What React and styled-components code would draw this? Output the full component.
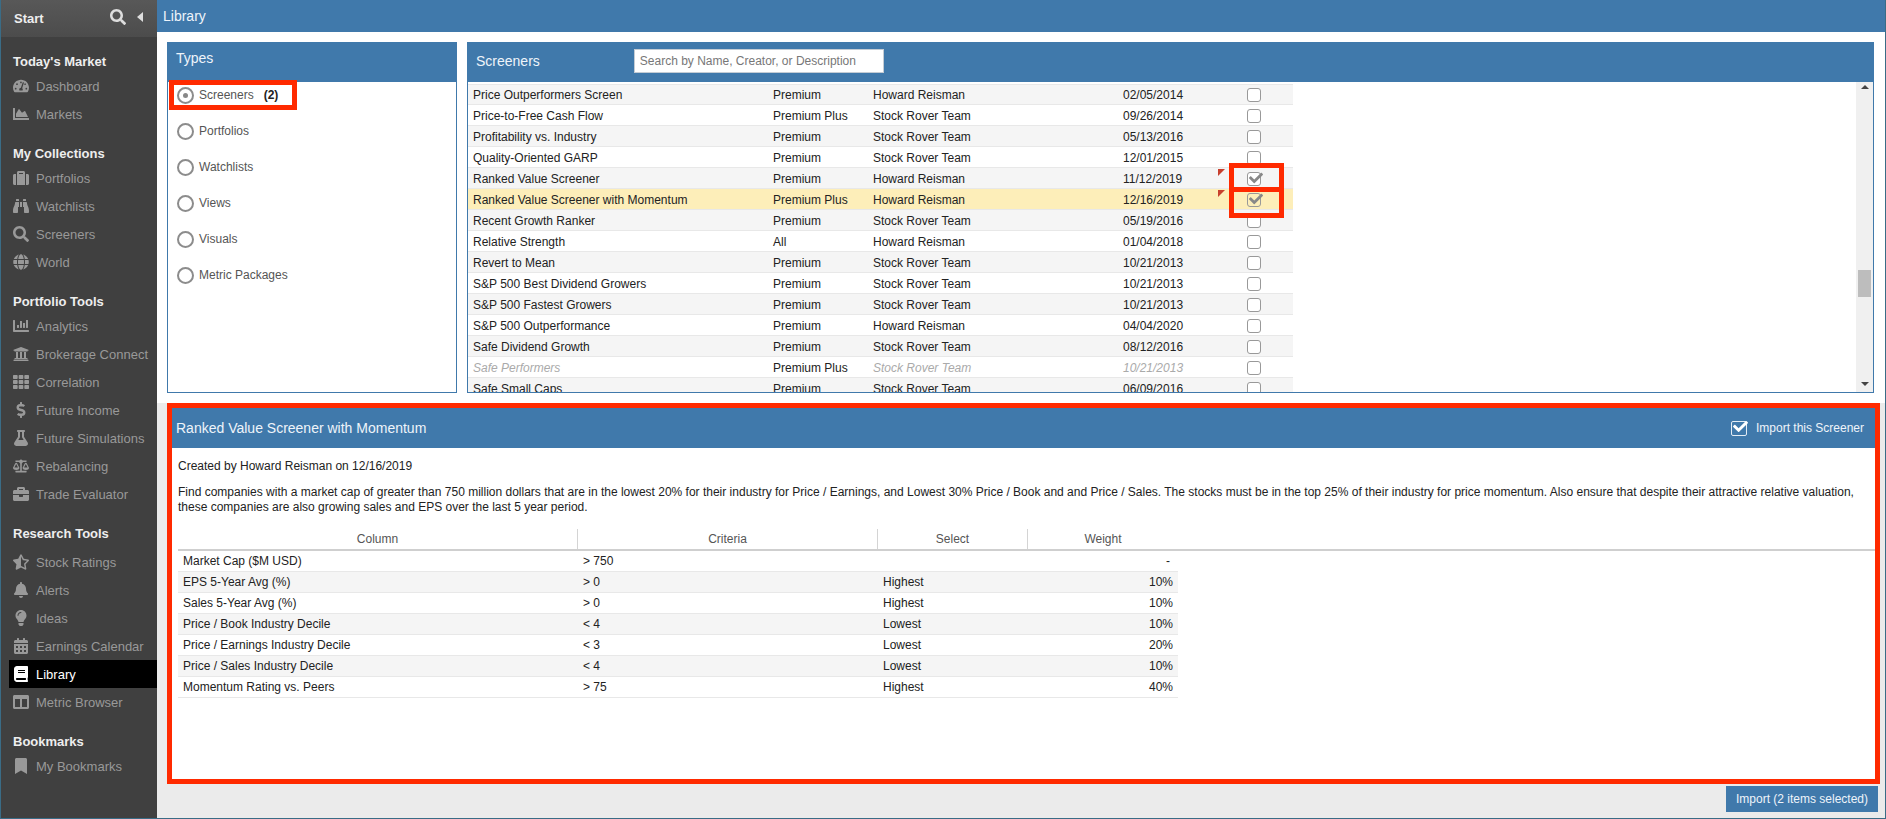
import styled, { createGlobalStyle } from "styled-components";
import {
  FaBalanceScale, FaBell, FaBinoculars, FaBook, FaBookmark, FaBriefcase, FaCalendarAlt,
  FaChartArea, FaChartBar, FaCheck, FaColumns, FaDollarSign, FaFlask, FaGlobe, FaLightbulb,
  FaSearch, FaStarHalfAlt, FaSuitcase, FaTachometerAlt, FaTh, FaUniversity,
} from "react-icons/fa";

const BLUE = "#4079ab";
const RED = "#ff2a00";

const GlobalStyle = createGlobalStyle`
  html, body {
    margin: 0;
    padding: 0;
    overflow: hidden;
    background: #fff;
  }
  * {
    box-sizing: border-box;
  }
`;

const Page = styled.div`
  display: grid;
  grid-template-columns: 156px 1fr;
  width: 100vw;
  height: 100vh;
  border: 1px solid #3a6c86;
  border-top: 0;
  font-family: "Liberation Sans", Arial, sans-serif;
  font-size: 12px;
  color: #222;
`;

const Sidebar = styled.nav`
  display: flex;
  flex-direction: column;
  background: #404040;
`;

const SideTop = styled.div`
  display: flex;
  align-items: center;
  height: 37px;
  flex: none;
  padding: 0 13px;
  background: linear-gradient(#585858, #4c4c4c);
`;

const StartLabel = styled.span`
  flex: 1;
  font-size: 13px;
  font-weight: bold;
  color: #eee;
`;

const SearchGlyph = styled(FaSearch)`
  width: 16px;
  height: 16px;
  margin-top: -3px;
  color: #ddd;
`;

const Collapse = styled.span`
  width: 0;
  height: 0;
  margin: -3px 1px 0 11px;
  border-top: 5px solid transparent;
  border-bottom: 5px solid transparent;
  border-right: 6px solid #ddd;
`;

const SideSection = styled.section`
  display: flex;
  flex-direction: column;
  margin-top: ${(p) => (p.$first ? "16px" : "17px")};
`;

const SideHeading = styled.h3`
  margin: 0 0 ${(p) => p.$gap || 1}px 12px;
  font-size: 13px;
  line-height: 18px;
  font-weight: bold;
  color: #eee;
`;

const SideItem = styled.a`
  display: flex;
  align-items: center;
  gap: 6px;
  height: 28px;
  margin-left: 8px;
  padding-left: 3px;
  font-size: 13px;
  color: ${(p) => (p.$active ? "#fff" : "#999")};
  background: ${(p) => (p.$active ? "#000" : "transparent")};
  font-weight: ${(p) => (p.$active ? 500 : 400)};
`;

const SideIcon = styled.span`
  display: flex;
  align-items: center;
  justify-content: center;
  width: 18px;
  flex: none;
  font-size: 16px;
`;

const Main = styled.main`
  display: flex;
  flex-direction: column;
  min-width: 0;
`;

const TopBar = styled.header`
  display: flex;
  align-items: center;
  height: 32px;
  flex: none;
  padding-left: 6px;
  background: ${BLUE};
  font-size: 14px;
  color: #eef4fa;
`;

const Upper = styled.div`
  display: grid;
  grid-template-columns: 290px 1fr;
  gap: 10px;
  height: 371px;
  flex: none;
  padding: 10px 11px 10px 10px;
  background: #fff;
`;

const Panel = styled.section`
  display: flex;
  flex-direction: column;
  min-width: 0;
  min-height: 0;
  border: 1px solid ${BLUE};
`;

const PanelHead = styled.div`
  display: flex;
  align-items: center;
  height: 40px;
  flex: none;
  padding: 0 0 ${(p) => p.$lift || 0}px 8px;
  margin-top: -1px;
  background: ${BLUE};
  font-size: 14px;
  color: #eef4fa;
`;

const TypeList = styled.div`
  display: flex;
  flex-direction: column;
  gap: 10px;
  padding-left: 9px;
`;

const TypeRow = styled.label`
  position: relative;
  display: flex;
  align-items: center;
  gap: 5px;
  height: 26px;
  color: #555;
`;

const Radio = styled.span`
  display: flex;
  align-items: center;
  justify-content: center;
  width: 17px;
  height: 17px;
  border: 2px solid #8c8c8c;
  border-radius: 50%;
  background: #fff;
  &::after {
    content: "";
    display: ${(p) => (p.$on ? "block" : "none")};
    width: 5px;
    height: 5px;
    border-radius: 50%;
    background: #888;
  }
`;

const Count = styled.b`
  margin-left: 5px;
  color: #222;
`;

const Marker = styled.span`
  position: absolute;
  z-index: 2;
  top: ${(p) => p.$top}px;
  left: ${(p) => p.$left}px;
  width: ${(p) => p.$w}px;
  height: ${(p) => p.$h}px;
  border: 5px solid ${RED};
  pointer-events: none;
`;

const SearchBox = styled.input`
  width: 250px;
  height: 24px;
  margin-left: 94px;
  padding: 0 5px;
  border: 1px solid #c4ccd4;
  background: #fff;
  font: inherit;
  font-size: 12px;
  &::placeholder {
    color: #777;
    opacity: 1;
  }
`;

const ListArea = styled.div`
  display: flex;
  flex: 1;
  min-height: 0;
`;

const List = styled.div`
  flex: 1;
  min-width: 0;
  overflow: hidden;
  padding-top: 2px;
`;

const Row = styled.div`
  display: grid;
  grid-template-columns: 300px 100px 250px 110px 52px 13px;
  width: 825px;
  height: 21px;
  align-items: center;
  padding-top: ${(p) => (p.$first ? "1px" : "2px")};
  border-bottom: 1px solid #e8e8e8;
  border-top: ${(p) => (p.$first ? "1px solid #e8e8e8" : "0")};
  background: ${(p) => (p.$selected ? "#fdeeb9" : p.$odd ? "#f5f5f5" : "#fff")};
`;

const Cell = styled.div`
  position: relative;
  padding-left: 5px;
  white-space: nowrap;
  color: ${(p) => (p.$dim ? "#aaa" : "#222")};
  font-style: ${(p) => (p.$dim ? "italic" : "normal")};
`;

const Flag = styled.span`
  position: absolute;
  top: -3px;
  right: 3px;
  width: 0;
  height: 0;
  border-top: 7px solid #c8402e;
  border-right: 7px solid transparent;
`;

const CheckCell = styled.div`
  position: relative;
  display: flex;
  justify-content: center;
`;

const Checkbox = styled.span`
  display: flex;
  align-items: center;
  justify-content: center;
  width: 14px;
  height: 14px;
  border: 1.5px solid #999;
  border-radius: 3px;
  background: ${(p) => (p.$clear ? "transparent" : "#fff")};
  svg {
    flex: none;
    width: 14px;
    height: 14px;
    margin: -3px -3px 0 0;
    color: #888;
  }
`;

const ScrollTrack = styled.div`
  display: flex;
  flex-direction: column;
  align-items: center;
  width: 17px;
  flex: none;
  background: #f0f0f0;
`;

const ScrollUp = styled.span`
  width: 0;
  height: 0;
  margin-top: 3px;
  border-left: 4px solid transparent;
  border-right: 4px solid transparent;
  border-bottom: 4px solid #444;
`;

const ScrollDown = styled.span`
  width: 0;
  height: 0;
  margin-top: auto;
  margin-bottom: 6px;
  border-left: 4px solid transparent;
  border-right: 4px solid transparent;
  border-top: 4px solid #444;
`;

const ScrollThumb = styled.span`
  width: 13px;
  height: 27px;
  margin-top: 181px;
  background: #bdbdbd;
`;

const Lower = styled.div`
  display: flex;
  flex-direction: column;
  flex: 1;
  min-height: 0;
  padding: 0 5px 5px 10px;
  background: #ebebeb;
`;

const Details = styled.section`
  display: flex;
  flex-direction: column;
  height: 381px;
  flex: none;
  border: 5px solid ${RED};
  background: #fff;
`;

const DetailsHead = styled.div`
  display: flex;
  align-items: center;
  justify-content: space-between;
  height: 40px;
  flex: none;
  padding: 0 11px 0 4px;
  background: ${BLUE};
  font-size: 14px;
  color: #eef4fa;
`;

const ImportToggle = styled.label`
  display: flex;
  align-items: center;
  gap: 9px;
  font-size: 12px;
`;

const ImportBox = styled.span`
  display: flex;
  align-items: center;
  justify-content: center;
  width: 16px;
  height: 15px;
  border: 1.5px solid #e4edf5;
  border-radius: 2px;
  svg {
    flex: none;
    width: 15px;
    height: 15px;
    margin: -3px -3px 0 0;
    color: #fff;
  }
`;

const DetailsBody = styled.div`
  padding: 11px 0 0 6px;
  line-height: 15px;
`;

const Para = styled.p`
  margin: 0 0 11px;
  padding-right: 20px;
`;

const SpecHead = styled.div`
  display: grid;
  grid-template-columns: 400px 300px 150px 150px;
  height: 22px;
  margin-top: 14px;
  border-bottom: 2px solid #cfcfcf;
  color: #555;
`;

const SpecHeadCell = styled.div`
  display: flex;
  align-items: center;
  justify-content: center;
  border-right: ${(p) => (p.$last ? "0" : "1px solid #d4d4d4")};
`;

const SpecRow = styled.div`
  display: grid;
  grid-template-columns: 399px 300px 150px 151px;
  width: 1000px;
  height: 21px;
  align-items: center;
  border-bottom: 1px solid #e8e8e8;
  background: ${(p) => (p.$odd ? "#f5f5f5" : "#fff")};
`;

const SpecCell = styled.div`
  padding-left: ${(p) => (p.$first ? "5px" : "6px")};
  padding-right: ${(p) => (p.$right ? (p.$dash ? "8px" : "5px") : "0")};
  text-align: ${(p) => (p.$right ? "right" : "left")};
  white-space: nowrap;
`;

const Footer = styled.div`
  display: flex;
  justify-content: flex-end;
  padding: 2px 2px 0 0;
`;

const ImportButton = styled.button`
  width: 152px;
  height: 26px;
  padding: 0;
  border: 0;
  background: ${BLUE};
  font: inherit;
  color: #eef4fa;
`;

const NAV = [
  { title: "Today's Market", first: true, items: [["Dashboard", FaTachometerAlt], ["Markets", FaChartArea]] },
  {
    title: "My Collections",
    items: [["Portfolios", FaSuitcase], ["Watchlists", FaBinoculars], ["Screeners", FaSearch], ["World", FaGlobe]],
  },
  {
    title: "Portfolio Tools",
    items: [
      ["Analytics", FaChartBar],
      ["Brokerage Connect", FaUniversity],
      ["Correlation", FaTh],
      ["Future Income", FaDollarSign],
      ["Future Simulations", FaFlask],
      ["Rebalancing", FaBalanceScale],
      ["Trade Evaluator", FaBriefcase],
    ],
  },
  {
    title: "Research Tools",
    gap: 5,
    items: [
      ["Stock Ratings", FaStarHalfAlt],
      ["Alerts", FaBell],
      ["Ideas", FaLightbulb],
      ["Earnings Calendar", FaCalendarAlt],
      ["Library", FaBook, true],
      ["Metric Browser", FaColumns],
    ],
  },
  { title: "Bookmarks", items: [["My Bookmarks", FaBookmark]] },
];

const TYPES = ["Portfolios", "Watchlists", "Views", "Visuals", "Metric Packages"];

const SCREENERS = [
  ["Price Outperformers Screen", "Premium", "Howard Reisman", "02/05/2014"],
  ["Price-to-Free Cash Flow", "Premium Plus", "Stock Rover Team", "09/26/2014"],
  ["Profitability vs. Industry", "Premium", "Stock Rover Team", "05/13/2016"],
  ["Quality-Oriented GARP", "Premium", "Stock Rover Team", "12/01/2015"],
  ["Ranked Value Screener", "Premium", "Howard Reisman", "11/12/2019", { checked: true, marker: [-9, 29] }],
  ["Ranked Value Screener with Momentum", "Premium Plus", "Howard Reisman", "12/16/2019", { checked: true, selected: true, marker: [-6, 31] }],
  ["Recent Growth Ranker", "Premium", "Stock Rover Team", "05/19/2016"],
  ["Relative Strength", "All", "Howard Reisman", "01/04/2018"],
  ["Revert to Mean", "Premium", "Stock Rover Team", "10/21/2013"],
  ["S&P 500 Best Dividend Growers", "Premium", "Stock Rover Team", "10/21/2013"],
  ["S&P 500 Fastest Growers", "Premium", "Stock Rover Team", "10/21/2013"],
  ["S&P 500 Outperformance", "Premium", "Howard Reisman", "04/04/2020"],
  ["Safe Dividend Growth", "Premium", "Stock Rover Team", "08/12/2016"],
  ["Safe Performers", "Premium Plus", "Stock Rover Team", "10/21/2013", { dim: true }],
  ["Safe Small Caps", "Premium", "Stock Rover Team", "06/09/2016"],
];

const CRITERIA = [
  ["Market Cap ($M USD)", "> 750", "", "-"],
  ["EPS 5-Year Avg (%)", "> 0", "Highest", "10%"],
  ["Sales 5-Year Avg (%)", "> 0", "Highest", "10%"],
  ["Price / Book Industry Decile", "< 4", "Lowest", "10%"],
  ["Price / Earnings Industry Decile", "< 3", "Lowest", "20%"],
  ["Price / Sales Industry Decile", "< 4", "Lowest", "10%"],
  ["Momentum Rating vs. Peers", "> 75", "Highest", "40%"],
];

function SideNav() {
  return (
    <Sidebar>
      <SideTop>
        <StartLabel>Start</StartLabel>
        <SearchGlyph />
        <Collapse />
      </SideTop>
      {NAV.map((section) => (
        <SideSection key={section.title} $first={section.first}>
          <SideHeading $gap={section.gap}>{section.title}</SideHeading>
          {section.items.map(([label, Icon, active]) => (
            <SideItem key={label} $active={active}>
              <SideIcon><Icon /></SideIcon>
              {label}
            </SideItem>
          ))}
        </SideSection>
      ))}
    </Sidebar>
  );
}

function ScreenerRow({ row, index }) {
  const [name, plan, creator, date, opts = {}] = row;
  return (
    <Row $first={index === 0} $odd={index % 2 === 0} $selected={opts.selected}>
      <Cell $dim={opts.dim}>{name}</Cell>
      <Cell>{plan}</Cell>
      <Cell $dim={opts.dim}>{creator}</Cell>
      <Cell $dim={opts.dim}>
        {date}
        {opts.checked && <Flag />}
      </Cell>
      <CheckCell>
        <Checkbox $clear={opts.selected}>{opts.checked && <FaCheck />}</Checkbox>
        {opts.marker && <Marker $top={opts.marker[0]} $left={1} $w={55} $h={opts.marker[1]} />}
      </CheckCell>
    </Row>
  );
}

export default function App() {
  return (
    <>
      <GlobalStyle />
      <Page>
        <SideNav />
        <Main>
          <TopBar>Library</TopBar>
          <Upper>
            <Panel>
              <PanelHead $lift={8}>Types</PanelHead>
              <TypeList>
                <TypeRow>
                  <Radio $on />
                  Screeners
                  <Count>(2)</Count>
                  <Marker $top={-2} $left={-8} $w={128} $h={30} />
                </TypeRow>
                {TYPES.map((type) => (
                  <TypeRow key={type}>
                    <Radio />
                    {type}
                  </TypeRow>
                ))}
              </TypeList>
            </Panel>
            <Panel>
              <PanelHead $lift={2}>
                Screeners
                <SearchBox placeholder="Search by Name, Creator, or Description" />
              </PanelHead>
              <ListArea>
                <List>
                  {SCREENERS.map((row, i) => (
                    <ScreenerRow key={row[0]} row={row} index={i} />
                  ))}
                </List>
                <ScrollTrack>
                  <ScrollUp />
                  <ScrollThumb />
                  <ScrollDown />
                </ScrollTrack>
              </ListArea>
            </Panel>
          </Upper>
          <Lower>
            <Details>
              <DetailsHead>
                Ranked Value Screener with Momentum
                <ImportToggle>
                  <ImportBox><FaCheck /></ImportBox>
                  Import this Screener
                </ImportToggle>
              </DetailsHead>
              <DetailsBody>
                <Para>Created by Howard Reisman on 12/16/2019</Para>
                <Para>
                  Find companies with a market cap of greater than 750 million dollars that are in the lowest 20% for their industry for Price / Earnings, and Lowest 30% Price / Book and and Price / Sales. The stocks must be in the top 25% of their industry for price momentum. Also ensure that despite their attractive relative valuation, these companies are also growing sales and EPS over the last 5 year period.
                </Para>
                <SpecHead>
                  <SpecHeadCell>Column</SpecHeadCell>
                  <SpecHeadCell>Criteria</SpecHeadCell>
                  <SpecHeadCell>Select</SpecHeadCell>
                  <SpecHeadCell $last>Weight</SpecHeadCell>
                </SpecHead>
                {CRITERIA.map(([column, criteria, select, weight], i) => (
                  <SpecRow key={column} $odd={i % 2 === 1}>
                    <SpecCell $first>{column}</SpecCell>
                    <SpecCell>{criteria}</SpecCell>
                    <SpecCell>{select}</SpecCell>
                    <SpecCell $right $dash={weight === "-"}>{weight}</SpecCell>
                  </SpecRow>
                ))}
              </DetailsBody>
            </Details>
            <Footer>
              <ImportButton>Import (2 items selected)</ImportButton>
            </Footer>
          </Lower>
        </Main>
      </Page>
    </>
  );
}
